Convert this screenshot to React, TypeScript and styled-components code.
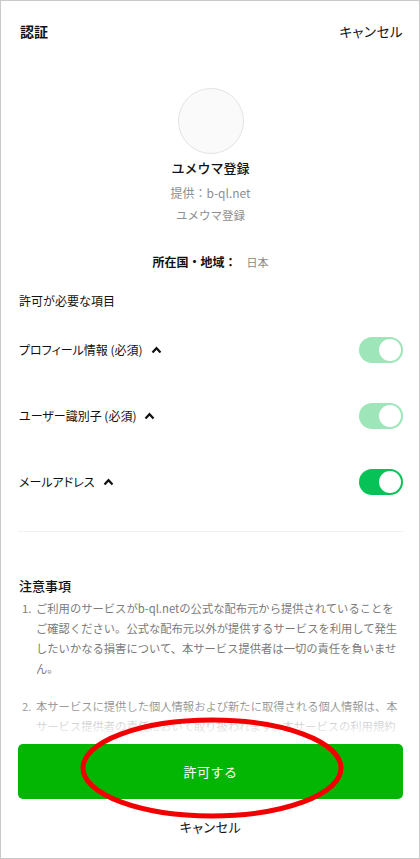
import styled, { createGlobalStyle } from 'styled-components';

const GlobalStyle = createGlobalStyle`
	html, body {
		margin: 0;
		padding: 0;
		background: #fff;
	}
	body {
		font-family: 'Noto Sans CJK JP', 'Noto Sans', sans-serif;
		color: #111;
	}
`;

const Frame = styled.div`
	position: relative;
	box-sizing: border-box;
	width: 420px;
	height: 859px;
	border: 1px solid #c9c9c9;
	display: flex;
	flex-direction: column;
	background: #fff;
	overflow: hidden;
`;

const Header = styled.header`
	height: 59px;
	flex: none;
	display: flex;
	align-items: center;
	justify-content: space-between;
	padding: 0 16px 0 19px;
`;

const HeaderTitle = styled.h1`
	margin: 0;
	font-size: 14px;
	font-weight: 700;
	line-height: 20px;
`;

const HeaderLink = styled.span`
	font-size: 13.5px;
	line-height: 20px;
	font-feature-settings: 'palt';
	letter-spacing: 0.5px;
`;

const Body = styled.main`
	position: relative;
	flex: 1;
	overflow: hidden;
	padding: 0 16px 0 17px;
`;

const Fade = styled.div`
	position: absolute;
	left: 0;
	right: 0;
	bottom: 0;
	height: 36px;
	background: linear-gradient(rgba(255, 255, 255, 0.1), rgba(255, 255, 255, 0.95));
	pointer-events: none;
`;

const Channel = styled.section`
	display: flex;
	flex-direction: column;
	align-items: center;
	padding-top: 28px;
`;

const Avatar = styled.div`
	width: 64px;
	height: 64px;
	border-radius: 50%;
	background: #fafafa;
	border: 1px solid #e3e3e3;
`;

const ChannelName = styled.div`
	margin-top: 4px;
	margin-bottom: 3px;
	font-size: 13px;
	font-weight: 500;
	line-height: 20px;
`;

const ChannelMeta = styled.div<{ $size: number }>`
	font-size: ${(p) => p.$size}px;
	line-height: 23px;
	color: #8e8e8e;
`;

const Region = styled.div`
	margin-top: 25px;
	display: flex;
	justify-content: center;
	align-items: baseline;
	gap: 10px;
	line-height: 20px;
`;

const RegionLabel = styled.span`
	font-size: 12px;
	font-weight: 700;
`;

const RegionValue = styled.span`
	font-size: 11px;
	color: #888;
`;

const SectionTitle = styled.h2<{ $strong?: boolean }>`
	margin: 0;
	font-size: ${(p) => (p.$strong ? 13 : 12)}px;
	font-weight: ${(p) => (p.$strong ? 500 : 400)};
	line-height: 20px;
	padding-left: 1px;
`;

const Permissions = styled.div`
	margin-top: 19px;
`;

const PermissionList = styled.ul`
	list-style: none;
	margin: 6px 0 0;
	padding: 0;
	border-bottom: 1px solid #f0f0f0;
	padding-bottom: 16px;
`;

const PermissionRow = styled.li`
	height: 66px;
	display: flex;
	align-items: center;
	justify-content: space-between;
	padding-left: 1px;
`;

const PermissionLabel = styled.span`
	display: flex;
	align-items: center;
	gap: 8px;
	font-size: 12px;
	line-height: 20px;
	font-feature-settings: 'palt';
`;

const Toggle = styled.span<{ $locked: boolean }>`
	position: relative;
	width: 44px;
	height: 26px;
	border-radius: 13px;
	background: ${(p) => (p.$locked ? '#9ee6ba' : '#07c256')};
	flex: none;
	&::after {
		content: '';
		position: absolute;
		top: 2px;
		right: 2px;
		width: 22px;
		height: 22px;
		border-radius: 50%;
		background: #fff;
	}
`;

const Notes = styled.section`
	margin-top: 44px;
`;

const NoteList = styled.ol`
	margin: 2px 0 0;
	padding: 0;
	list-style: none;
	color: #7a7a7a;
	font-size: 11.3px;
	line-height: 20px;
`;

const NoteItem = styled.li`
	display: flex;
	gap: 3px;
	padding-left: 4px;
	& + & {
		margin-top: 18px;
	}
`;

const NoteNumber = styled.span`
	width: 11px;
	flex: none;
`;

const NoteLine = styled.span`
	display: block;
	white-space: nowrap;
`;

const Footer = styled.footer`
	flex: none;
	padding: 8px 16px 21px 17px;
	display: flex;
	flex-direction: column;
	align-items: center;
`;

const AllowButton = styled.button`
	width: 100%;
	height: 55px;
	border: none;
	border-radius: 5px;
	background: #04b604;
	color: #fff;
	font-family: inherit;
	font-size: 13px;
	letter-spacing: 0.5px;
`;

const CancelLink = styled.span`
	margin-top: 18px;
	font-size: 13px;
	line-height: 20px;
	font-feature-settings: 'palt';
	letter-spacing: 0.5px;
`;

const Annotation = styled.svg`
	position: absolute;
	left: 78px;
	top: 714px;
	pointer-events: none;
`;

const Caret = () => (
	<svg width="11" height="8" viewBox="0 0 11 8">
		<polyline
			points="1.5,6.5 5.5,2.2 9.5,6.5"
			fill="none"
			stroke="#111"
			strokeWidth="2.2"
			strokeLinejoin="miter"
		/>
	</svg>
);

const permissions = [
	{ label: 'プロフィール情報 (必須)', locked: true },
	{ label: 'ユーザー識別子 (必須)', locked: true },
	{ label: 'メールアドレス', locked: false }
];

const notes = [
	[
		'ご利用のサービスがb-ql.netの公式な配布元から提供されていることを',
		'ご確認ください。公式な配布元以外が提供するサービスを利用して発生',
		'したいかなる損害について、本サービス提供者は一切の責任を負いませ',
		'ん。'
	],
	[
		'本サービスに提供した個人情報および新たに取得される個人情報は、本',
		'サービス提供者の責任において取り扱われます。本サービスの利用規約'
	]
];

export default function App() {
	return (
		<>
			<GlobalStyle />
			<Frame>
				<Header>
					<HeaderTitle>認証</HeaderTitle>
					<HeaderLink>キャンセル</HeaderLink>
				</Header>
				<Body>
					<Channel>
						<Avatar />
						<ChannelName>ユメウマ登録</ChannelName>
						<ChannelMeta $size={12}>提供：b-ql.net</ChannelMeta>
						<ChannelMeta $size={11.5}>ユメウマ登録</ChannelMeta>
					</Channel>
					<Region>
						<RegionLabel>所在国・地域：</RegionLabel>
						<RegionValue>日本</RegionValue>
					</Region>
					<Permissions>
						<SectionTitle>許可が必要な項目</SectionTitle>
						<PermissionList>
							{permissions.map((p) => (
								<PermissionRow key={p.label}>
									<PermissionLabel>
										{p.label}
										<Caret />
									</PermissionLabel>
									<Toggle $locked={p.locked} />
								</PermissionRow>
							))}
						</PermissionList>
					</Permissions>
					<Notes>
						<SectionTitle $strong>注意事項</SectionTitle>
						<NoteList>
							{notes.map((lines, i) => (
								<NoteItem key={i}>
									<NoteNumber>{i + 1}.</NoteNumber>
									<div>
										{lines.map((line) => (
											<NoteLine key={line}>{line}</NoteLine>
										))}
									</div>
								</NoteItem>
							))}
						</NoteList>
					</Notes>
					<Fade />
				</Body>
				<Footer>
					<AllowButton>許可する</AllowButton>
					<CancelLink>キャンセル</CancelLink>
				</Footer>
				<Annotation width="266" height="106" viewBox="0 0 266 106">
					<ellipse cx="133" cy="53" rx="129" ry="48" fill="none" stroke="#f20000" strokeWidth="5" />
				</Annotation>
			</Frame>
		</>
	);
}
